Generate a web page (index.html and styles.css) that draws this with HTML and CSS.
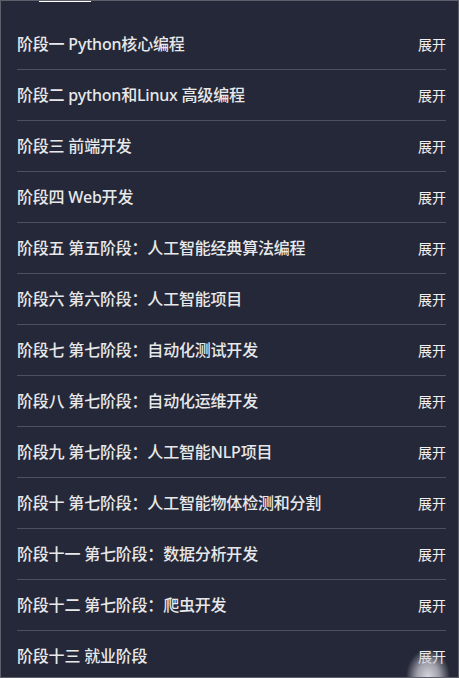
FILE: index.html
```html
<!DOCTYPE html>
<html lang="zh-CN">
<head>
    <meta charset="UTF-8">
    <meta name="viewport" content="width=device-width, initial-scale=1.0">
    <title>课程大纲</title>
    <link rel="stylesheet" href="styles.css">
</head>
<body>

    <div class="panel">
        <div class="crumb">
            <div class="crumb-inner">
                <span class="crumb-dot"></span>
                <a href="#">课程大纲</a>
            </div>
        </div>

        <ul class="stages">
            <li class="stage"><span class="stage-name">阶段一 Python核心编程</span><span class="toggle">展开</span></li>
            <li class="stage"><span class="stage-name">阶段二 python和Linux 高级编程</span><span class="toggle">展开</span></li>
            <li class="stage"><span class="stage-name">阶段三 前端开发</span><span class="toggle">展开</span></li>
            <li class="stage"><span class="stage-name">阶段四 Web开发</span><span class="toggle">展开</span></li>
            <li class="stage"><span class="stage-name">阶段五 第五阶段：人工智能经典算法编程</span><span class="toggle">展开</span></li>
            <li class="stage"><span class="stage-name">阶段六 第六阶段：人工智能项目</span><span class="toggle">展开</span></li>
            <li class="stage"><span class="stage-name">阶段七 第七阶段：自动化测试开发</span><span class="toggle">展开</span></li>
            <li class="stage"><span class="stage-name">阶段八 第七阶段：自动化运维开发</span><span class="toggle">展开</span></li>
            <li class="stage"><span class="stage-name">阶段九 第七阶段：人工智能NLP项目</span><span class="toggle">展开</span></li>
            <li class="stage"><span class="stage-name">阶段十 第七阶段：人工智能物体检测和分割</span><span class="toggle">展开</span></li>
            <li class="stage"><span class="stage-name">阶段十一 第七阶段：数据分析开发</span><span class="toggle">展开</span></li>
            <li class="stage"><span class="stage-name">阶段十二 第七阶段：爬虫开发</span><span class="toggle">展开</span></li>
            <li class="stage"><span class="stage-name">阶段十三 就业阶段</span><span class="toggle">展开</span></li>
        </ul>

        <div class="glow"></div>
    </div>

</body>
</html>
```

FILE: styles.css
```css
html, body {
    margin: 0;
    height: 100%;
}
body {
    font-family: "Noto Sans", "Noto Sans CJK SC", sans-serif;
    background: #252838;
    overflow: hidden;
}
.panel {
    position: relative;
    box-sizing: border-box;
    height: 100vh;
    border: 1px solid #5d5f6a;
    background: #252838;
    overflow: hidden;
}
.crumb {
    height: 18px;
    overflow: hidden;
    padding-left: 18px;
}
.crumb-inner {
    display: flex;
    align-items: center;
    gap: 14px;
    margin-top: -15px;
    height: 18px;
}
.crumb-dot {
    width: 6px;
    height: 6px;
    border-radius: 50%;
    background: #b8524a;
}
.crumb a {
    color: #ffffff;
    font-size: 13px;
    line-height: 18px;
    text-decoration: underline;
}
.stages {
    list-style: none;
    margin: 0;
    padding: 0 12px 0 16px;
}
.stage {
    display: flex;
    justify-content: space-between;
    align-items: center;
    height: 50px;
    border-bottom: 1px solid #4e505e;
}
.stage-name {
    color: #e8e8ea;
    font-size: 16px;
    font-weight: 500;
    letter-spacing: -0.2px;
    margin-top: -2px;
}
.toggle {
    color: #f0f0f2;
    font-size: 14px;
}
.glow {
    position: absolute;
    right: 8px;
    bottom: 0;
    width: 44px;
    height: 28px;
    background: radial-gradient(ellipse 50% 100% at 50% 100%, rgba(215, 215, 222, 1), rgba(200, 200, 208, 0.75) 50%, rgba(37, 40, 56, 0) 100%);
}
```
